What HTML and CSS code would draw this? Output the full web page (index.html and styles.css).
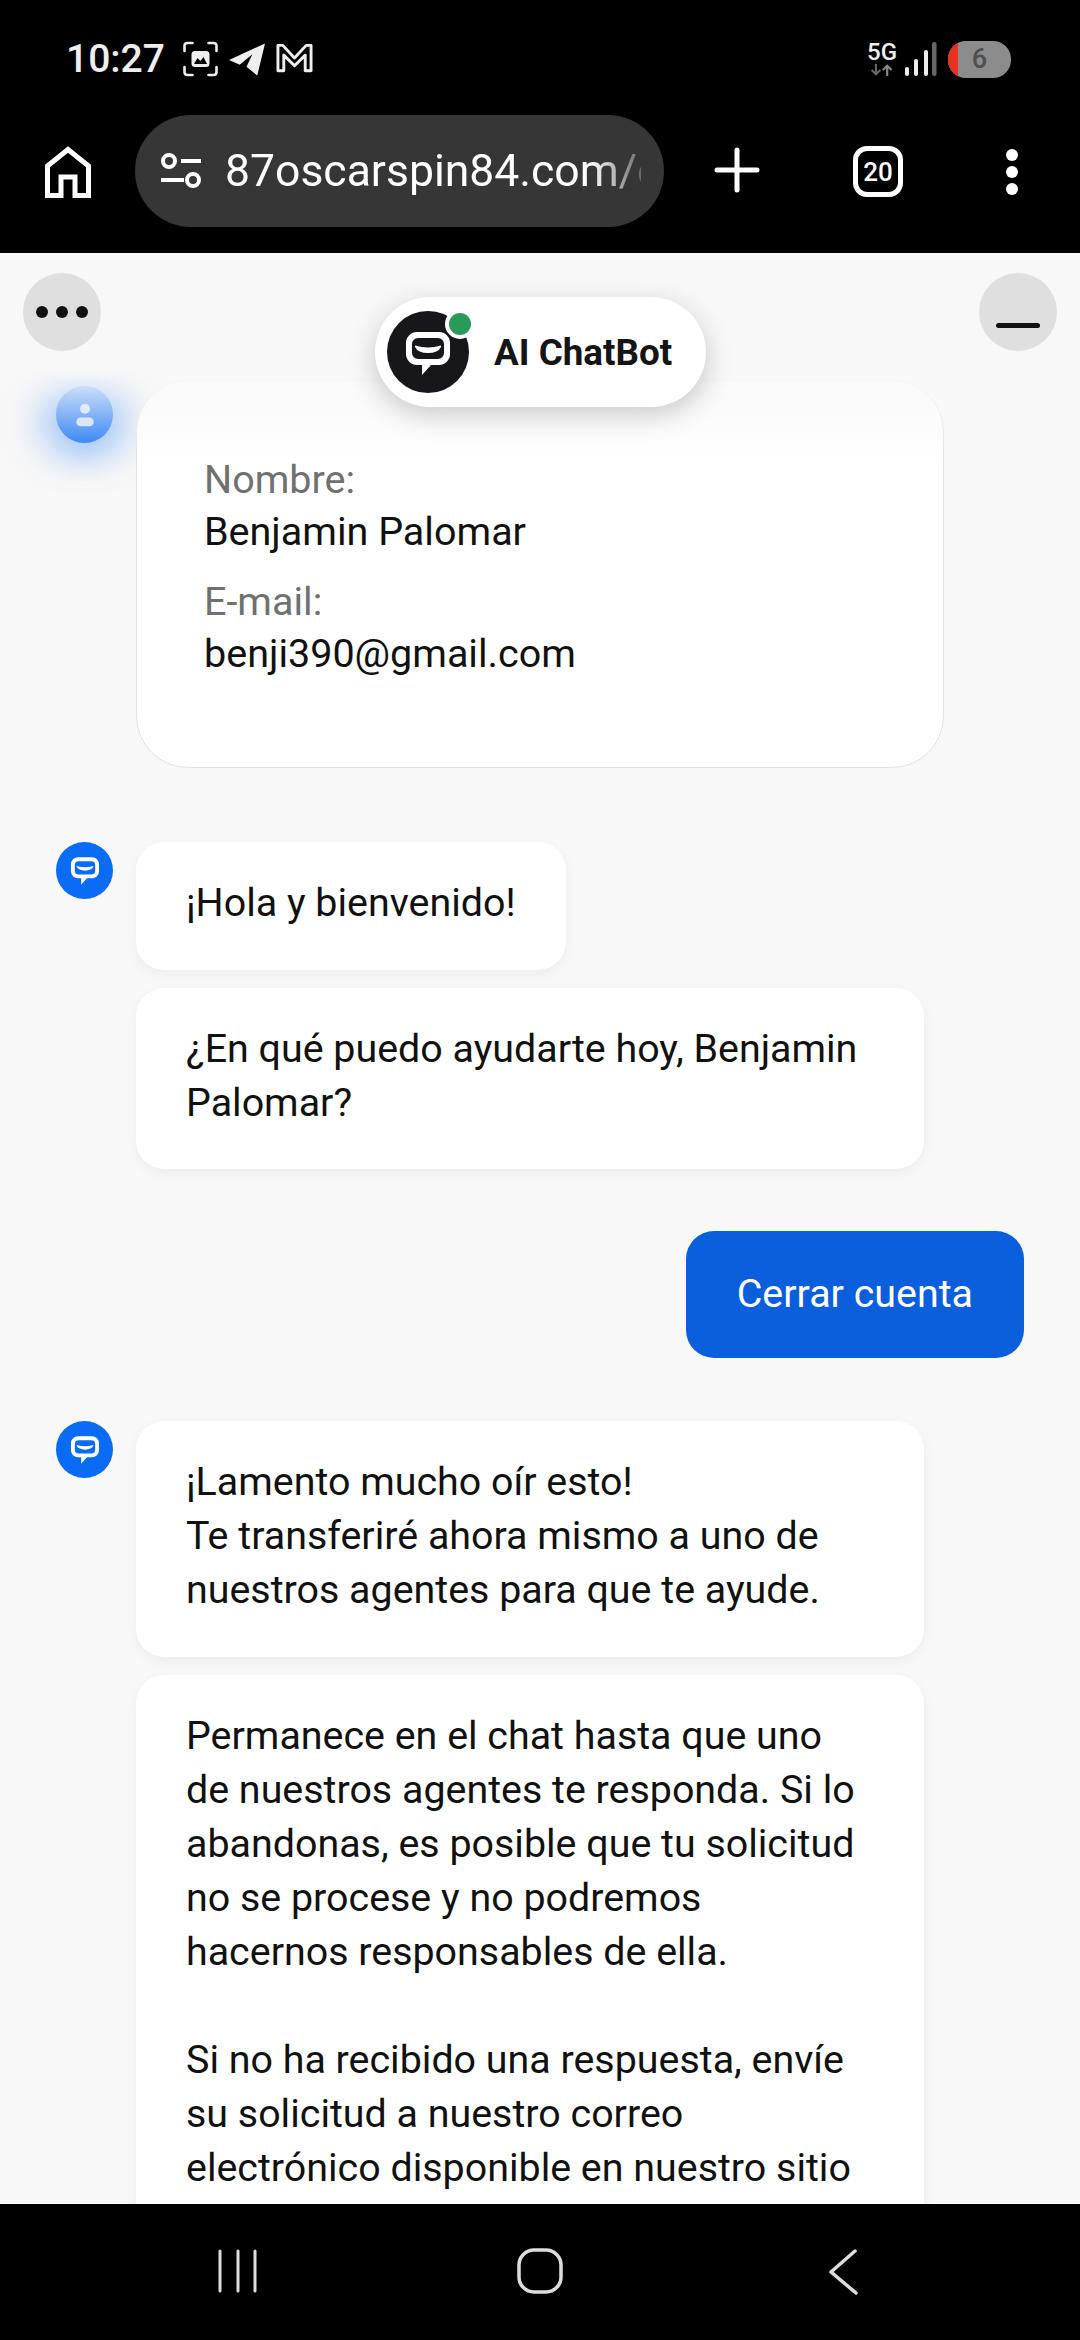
FILE: index.html
```html
<!DOCTYPE html>
<html lang="es">
<head>
    <meta charset="UTF-8">
    <meta name="viewport" content="width=device-width, initial-scale=1.0">
    <title>AI ChatBot</title>
    <link rel="stylesheet" href="styles.css">
</head>
<body>

<!-- shared chat bubble logo -->
<svg class="defs" width="0" height="0">
    <symbol id="bot-mark" viewBox="0 0 44 43">
        <path fill-rule="evenodd" fill="#fff" d="M11 0H33A11 11 0 0 1 44 11V22A11 11 0 0 1 33 33H25L16 43V33H11A11 11 0 0 1 0 22V11A11 11 0 0 1 11 0ZM12 6A6 6 0 0 0 6 12V21A6 6 0 0 0 12 27H32A6 6 0 0 0 38 21V12A6 6 0 0 0 32 6Z"/>
        <path fill="#fff" d="M9 13.500Q22 17.500 35 13.500V15Q32 21 22 21T9 15Z"/>
    </symbol>
</svg>

<div class="phone">
    <!-- Status bar -->
    <div class="status-bar">
        <span class="time">10:27</span>
        <svg class="status-icon" viewBox="0 0 36 36" fill="none" stroke="#eee" stroke-width="2.6" stroke-linecap="round">
            <path d="M2 10V5Q2 2 5 2H10M26 2H31Q34 2 34 5V10M34 26V31Q34 34 31 34H26M10 34H5Q2 34 2 31V26"/>
            <rect x="9" y="10" width="18" height="16" rx="3.500" fill="#eee" stroke="none"/>
            <path d="M11.500 23 15 17 18 20 21 16 24.500 23Z" fill="#000" stroke="none"/>
        </svg>
        <svg class="status-icon" viewBox="0 0 38 36">
            <path d="M0 19 37 2 29 35 18 26 24 13 11 24Z" fill="#eee"/>
        </svg>
        <svg class="status-icon" viewBox="0 0 38 36" fill="none" stroke="#eee" stroke-width="3" stroke-linejoin="round">
            <path d="M2 4H7L19 17 31 4H36V30H30V14L19 25 8 14V30H2Z"/>
        </svg>
        <div class="status-right">
            <div class="network">
                <span class="net-label">5G</span>
                <svg class="net-arrows" viewBox="0 0 30 14" fill="none" stroke-width="2.500">
                    <path d="M8 0V12M3 7 8 12 13 7" stroke="#666"/>
                    <path d="M21 14V2M16 7 21 2 26 7" stroke="#888"/>
                </svg>
            </div>
            <svg class="signal" viewBox="0 0 32 36">
                <rect x="0" y="26" width="4" height="9" rx="2" fill="#eee"/>
                <rect x="9" y="18" width="4" height="17" rx="2" fill="#eee"/>
                <rect x="19" y="9" width="4" height="26" rx="2" fill="#eee"/>
                <rect x="27" y="1" width="4.500" height="34" rx="2" fill="#666"/>
            </svg>
            <div class="battery"><span class="battery-low"></span><span class="battery-num">6</span></div>
        </div>
    </div>

    <!-- Browser toolbar -->
    <div class="toolbar">
        <svg class="home-icon" viewBox="0 0 46 52" fill="none" stroke="#fff" stroke-width="5">
            <path d="M2.500 49.500V20L23 3.500 43.500 20V49.500H30V31H16V49.500Z"/>
        </svg>
        <div class="url-bar">
            <svg class="tune-icon" viewBox="0 0 42 36" fill="none" stroke="#fff" stroke-width="4">
                <circle cx="9" cy="8" r="6"/>
                <path d="M21 8H41M1 27H24"/>
                <circle cx="33" cy="27" r="6"/>
            </svg>
            <span class="url-text">87oscarspin84.com/e</span>
        </div>
        <svg class="plus-icon" viewBox="0 0 46 46" stroke="#fff" stroke-width="5" stroke-linecap="round">
            <path d="M23 3V43M3 23H43"/>
        </svg>
        <div class="tabs-count">20</div>
        <div class="more-dots"><i></i><i></i><i></i></div>
    </div>

    <!-- Chat -->
    <div class="chat">
        <div class="messages">
            <div class="msg-row form-row">
                <div class="avatar avatar-user">
                    <svg viewBox="0 0 24 24" fill="#fff" fill-opacity=".75">
                        <circle cx="12" cy="7" r="4"/>
                        <rect x="5" y="14" width="14" height="7" rx="3.500"/>
                    </svg>
                </div>
                <div class="form-card">
                    <p class="field-label">Nombre:</p>
                    <p class="field-value">Benjamin Palomar</p>
                    <p class="field-label field-gap">E-mail:</p>
                    <p class="field-value">benji390@gmail.com</p>
                </div>
            </div>

            <div class="msg-row">
                <div class="avatar">
                    <svg class="avatar-mark"><use href="#bot-mark"/></svg>
                </div>
                <div class="bubbles">
                    <div class="bubble">¡Hola y bienvenido!</div>
                    <div class="bubble">¿En qué puedo ayudarte hoy, Benjamin Palomar?</div>
                </div>
            </div>

            <div class="user-row">
                <div class="bubble-user">Cerrar cuenta</div>
            </div>

            <div class="msg-row">
                <div class="avatar">
                    <svg class="avatar-mark"><use href="#bot-mark"/></svg>
                </div>
                <div class="bubbles">
                    <div class="bubble">¡Lamento mucho oír esto!<br>Te transferiré ahora mismo a uno de nuestros agentes para que te ayude.</div>
                    <div class="bubble bubble-long">Permanece en el chat hasta que uno de nuestros agentes te responda. Si lo abandonas, es posible que tu solicitud no se procese y no podremos hacernos responsables de ella.<br><br>Si no ha recibido una respuesta, envíe su solicitud a nuestro correo electrónico disponible en nuestro sitio</div>
                </div>
            </div>
        </div>

        <div class="chat-fade"></div>

        <div class="round-btn btn-menu"><i></i><i></i><i></i></div>
        <div class="round-btn btn-min"><span class="min-bar"></span></div>

        <div class="bot-pill">
            <div class="bot-logo">
                <svg class="bot-mark"><use href="#bot-mark"/></svg>
                <span class="online-dot"></span>
            </div>
            <span class="bot-name">AI ChatBot</span>
        </div>
    </div>

    <!-- Android nav bar -->
    <div class="nav-bar">
        <svg class="nav-recent" viewBox="0 0 44 44" stroke="#ddd" stroke-width="3" stroke-linecap="round">
            <path d="M4 2V42M22 2V42M39 2V42"/>
        </svg>
        <svg class="nav-home" viewBox="0 0 48 46" fill="none" stroke="#ddd" stroke-width="3.500">
            <rect x="3" y="2" width="42" height="42" rx="15"/>
        </svg>
        <svg class="nav-back" viewBox="0 0 30 46" fill="none" stroke="#ddd" stroke-width="3.500" stroke-linecap="round" stroke-linejoin="round">
            <path d="M27 2 3 23 28 44"/>
        </svg>
    </div>
</div>

</body>
</html>
```

FILE: styles.css
```css
* {
    box-sizing: border-box;
}
html, body {
    margin: 0;
    padding: 0;
    background: #000;
}
body {
    font-family: Roboto, "Noto Sans", sans-serif;
    color: #111;
}
p {
    margin: 0;
}
.defs {
    display: block;
}
.phone {
    width: 1080px;
    height: 2340px;
    display: flex;
    flex-direction: column;
    overflow: hidden;
}

/* status bar */
.status-bar {
    height: 115px;
    flex: none;
    display: flex;
    align-items: center;
    padding: 3px 69px 0 66px;
    background: #000;
}
.time {
    font-size: 39px;
    font-weight: 500;
    color: #eee;
    margin-right: 12px;
}
.status-icon {
    width: 37px;
    height: 36px;
    margin: 0 5px;
}
.status-right {
    margin-left: auto;
    display: flex;
    align-items: center;
}
.network {
    width: 32px;
    display: flex;
    flex-direction: column;
    align-items: center;
    margin-right: 7px;
}
.net-label {
    font-size: 24px;
    line-height: 22px;
    font-weight: 500;
    color: #eee;
}
.net-arrows {
    width: 26px;
    height: 14px;
}
.signal {
    width: 32px;
    height: 36px;
    margin-right: 11px;
}
.battery {
    width: 63px;
    height: 37px;
    border-radius: 18px;
    background: #8c8c8c;
    overflow: hidden;
    display: flex;
    align-items: center;
}
.battery-low {
    width: 10px;
    height: 100%;
    background: #e8301f;
}
.battery-num {
    flex: 1;
    text-align: center;
    font-size: 27px;
    font-weight: 500;
    color: #4f4f4f;
    padding-right: 10px;
}

/* toolbar */
.toolbar {
    height: 138px;
    flex: none;
    background: #000;
    display: flex;
    align-items: flex-start;
}
.home-icon {
    width: 46px;
    height: 52px;
    margin: 31px 44px 0 45px;
}
.url-bar {
    width: 529px;
    height: 112px;
    background: #363636;
    border-radius: 56px;
    display: flex;
    align-items: center;
    padding-left: 24px;
    overflow: hidden;
}
.tune-icon {
    width: 44px;
    height: 36px;
    flex: none;
}
.url-text {
    margin-left: 22px;
    width: 416px;
    flex: none;
    font-size: 44.500px;
    color: #fff;
    white-space: nowrap;
    overflow: hidden;
    -webkit-mask-image: linear-gradient(to right, #000 88%, rgba(0,0,0,.25) 100%);
    mask-image: linear-gradient(to right, #000 88%, rgba(0,0,0,.25) 100%);
}
.plus-icon {
    width: 46px;
    height: 46px;
    margin: 32px 0 0 50px;
}
.tabs-count {
    width: 50px;
    height: 51px;
    margin: 31px 0 0 93px;
    border: 5px solid #fff;
    border-radius: 14px;
    display: flex;
    align-items: center;
    justify-content: center;
    color: #fff;
    font-size: 26px;
    font-weight: 500;
}
.more-dots {
    margin: 34px 0 0 103px;
    display: flex;
    flex-direction: column;
    gap: 5px;
}
.more-dots i {
    width: 12px;
    height: 12px;
    border-radius: 50%;
    background: #fff;
}

/* chat */
.chat {
    flex: 1;
    min-height: 0;
    position: relative;
    overflow: hidden;
    background: #f8f8f8;
}
.messages {
    padding-top: 127px;
}
.msg-row {
    display: flex;
    align-items: flex-start;
    gap: 23px;
    padding-left: 56px;
}
.form-row {
    margin-bottom: 74px;
}
.avatar {
    width: 57px;
    height: 57px;
    flex: none;
    border-radius: 50%;
    background: #0a6cf5;
    display: flex;
    align-items: center;
    justify-content: center;
}
.avatar-mark {
    width: 28px;
    height: 28px;
    margin-top: 1px;
}
.avatar-user {
    margin-top: 6px;
    box-shadow: 0 -8px 40px 14px rgba(10, 108, 245, .7);
}
.avatar-user svg {
    width: 30px;
    height: 30px;
}
.form-card {
    width: 808px;
    height: 388px;
    padding: 73px 67px 0;
    background: #fff;
    border: 1px solid #e2e2e2;
    border-radius: 52px;
    font-size: 39.500px;
    line-height: 52px;
}
.field-label {
    color: #707070;
}
.field-value {
    color: #111;
}
.field-gap {
    margin-top: 18px;
}
.bubbles {
    width: 788px;
    display: flex;
    flex-direction: column;
    align-items: flex-start;
    gap: 18px;
}
.bubble {
    padding: 34px 50px 39.500px;
    background: #fff;
    border-radius: 28px;
    font-size: 39.400px;
    line-height: 54px;
    box-shadow: 0 4px 12px rgba(0, 0, 0, .05);
}
.bubble-long {
    padding-right: 60px;
}
.user-row {
    display: flex;
    justify-content: flex-end;
    padding-right: 56px;
    margin: 62px 0 63px;
}
.bubble-user {
    padding: 35.500px 51px 37.500px;
    background: #0b5fdc;
    color: #fff;
    border-radius: 28px;
    font-size: 39.400px;
    line-height: 54px;
}

/* things lying over the messages */
.chat-fade {
    position: absolute;
    left: 0;
    right: 0;
    top: 0;
    height: 210px;
    background: linear-gradient(to bottom, #f8f8f8 55%, rgba(248, 248, 248, 0));
}
.round-btn {
    position: absolute;
    top: 20px;
    width: 78px;
    height: 78px;
    border-radius: 50%;
    background: #dfdfdf;
    display: flex;
    align-items: center;
    justify-content: center;
}
.btn-menu {
    left: 23px;
    gap: 8px;
}
.btn-menu i {
    width: 12px;
    height: 12px;
    border-radius: 50%;
    background: #111;
}
.btn-min {
    left: 979px;
}
.min-bar {
    width: 44px;
    height: 5px;
    margin-top: 26px;
    border-radius: 3px;
    background: #111;
}
.bot-pill {
    position: absolute;
    left: 375px;
    top: 44px;
    width: 331px;
    height: 110px;
    background: #fff;
    border-radius: 55px;
    box-shadow: 0 8px 28px rgba(0, 0, 0, .2);
    display: flex;
    align-items: center;
    padding-left: 12px;
    gap: 25px;
}
.bot-logo {
    width: 82px;
    height: 82px;
    border-radius: 50%;
    background: #17171b;
    position: relative;
    display: flex;
    align-items: center;
    justify-content: center;
}
.bot-mark {
    width: 44px;
    height: 43px;
    margin-top: 2px;
}
.online-dot {
    position: absolute;
    left: 62px;
    top: 2px;
    width: 22px;
    height: 22px;
    border-radius: 50%;
    background: #2a9a5b;
    box-shadow: 0 0 0 4px #fff;
}
.bot-name {
    font-size: 36.800px;
    font-weight: 700;
    color: #151515;
}

/* nav bar */
.nav-bar {
    height: 136px;
    flex: none;
    background: #000;
    display: flex;
    align-items: flex-start;
    padding-top: 45px;
}
.nav-recent {
    width: 44px;
    height: 44px;
    margin-left: 216px;
}
.nav-home {
    width: 48px;
    height: 46px;
    margin-left: 256px;
    margin-top: -1px;
}
.nav-back {
    width: 30px;
    height: 46px;
    margin-left: 264px;
}
```
